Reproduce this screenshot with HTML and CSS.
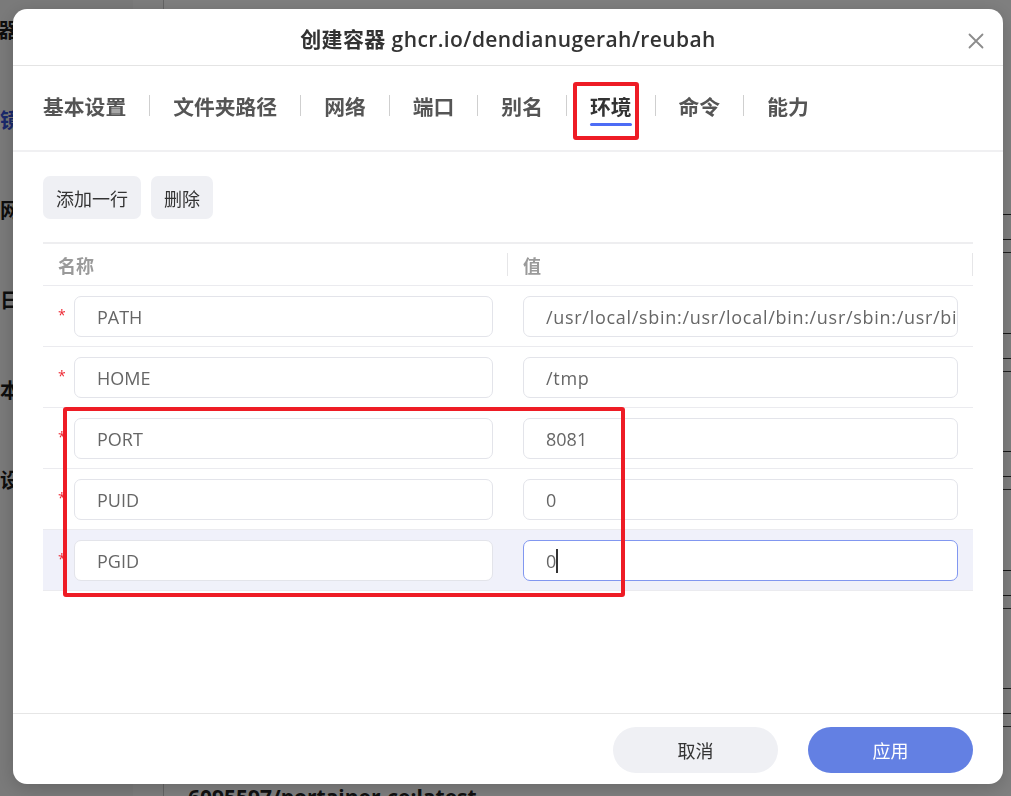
FILE: index.html
```html
<!DOCTYPE html>
<html lang="zh-CN">
<head>
<meta charset="utf-8">
<title>创建容器</title>
<link rel="stylesheet" href="styles.css">
</head>
<body>
<div class="page">
  <aside class="side">
    <div class="nav nav-cut">容器</div>
    <div class="nav nav-active">镜像</div>
    <div class="nav">网络</div>
    <div class="nav">日志</div>
    <div class="nav">本地</div>
    <div class="nav">设置</div>
  </aside>
  <div class="gutter"></div>
  <main class="panel">
    <div class="item"><span class="item-title">dendianugerah/reubah:latest</span><span class="link">链接</span></div>
    <div class="item"><span class="item-title">nginx:latest</span><span class="link">链接</span></div>
    <div class="item"><span class="item-title">redis:latest</span><span class="link">链接</span></div>
    <div class="item"><span class="item-title">mysql:8.0</span><span class="link">链接</span></div>
    <div class="item"><span class="item-title">6095597/portainer-ce:latest</span><span class="link">链接</span></div>
  </main>
</div>
<div class="overlay"></div>
<section class="modal">
  <header class="m-head">
    <div class="m-title">创建容器 ghcr.io/dendianugerah/reubah</div>
    <svg class="m-close" viewBox="0 0 16 16" width="16" height="16"><path d="M1.5 1.5 L14.5 14.5 M14.5 1.5 L1.5 14.5" stroke="#8c8c8c" stroke-width="1.8" stroke-linecap="round" fill="none"/></svg>
  </header>
  <nav class="tabs">
    <div class="tab">基本设置</div>
    <div class="tab">文件夹路径</div>
    <div class="tab">网络</div>
    <div class="tab">端口</div>
    <div class="tab">别名</div>
    <div class="tab active">环境</div>
    <div class="tab">命令</div>
    <div class="tab">能力</div>
  </nav>
  <div class="m-body">
    <div class="actions">
      <div class="btn">添加一行</div>
      <div class="btn">删除</div>
    </div>
    <div class="table">
      <div class="thead">
        <div class="th">名称</div>
        <div class="th">值</div>
      </div>
      <div class="tr">
        <div class="td"><span class="req">*</span><div class="inp">PATH</div></div>
        <div class="td"><div class="inp inp-wide">/usr/local/sbin:/usr/local/bin:/usr/sbin:/usr/bin:/sbin:/bin</div></div>
      </div>
      <div class="tr">
        <div class="td"><span class="req">*</span><div class="inp">HOME</div></div>
        <div class="td"><div class="inp inp-wide">/tmp</div></div>
      </div>
      <div class="tr">
        <div class="td"><span class="req">*</span><div class="inp">PORT</div></div>
        <div class="td"><div class="inp">8081</div></div>
      </div>
      <div class="tr">
        <div class="td"><span class="req">*</span><div class="inp">PUID</div></div>
        <div class="td"><div class="inp">0</div></div>
      </div>
      <div class="tr hover">
        <div class="td"><span class="req">*</span><div class="inp">PGID</div></div>
        <div class="td"><div class="inp focus">0<span class="caret"></span></div></div>
      </div>
    </div>
  </div>
  <footer class="m-foot">
    <div class="fbtn cancel">取消</div>
    <div class="fbtn ok">应用</div>
  </footer>
</section>
<div class="mark mark-tab"></div>
<div class="mark mark-rows"></div>
</body>
</html>
```
FILE: styles.css
```css
* { box-sizing: border-box; }
html, body { margin: 0; padding: 0; }
body {
  font-family: "Open Sans", "Noto Sans CJK SC", sans-serif;
  width: 1011px;
  height: 796px;
  overflow: hidden;
  background: #fff;
}

/* background page */
.page {
  display: flex;
  height: 796px;
  overflow: hidden;
  background: #fff;
}
.side {
  width: 133px;
  flex: none;
  background: #f4f4f4;
  padding-top: 15px;
  display: flex;
  flex-direction: column;
  gap: 60px;
  font-family: "Noto Sans CJK SC", sans-serif;
  font-size: 20px;
  font-weight: 700;
  line-height: 30px;
  color: #1c1c1c;
}
.nav { white-space: nowrap; }
.nav-cut { margin-left: -22px; }
.nav-active { color: #3552d8; }
.gutter { width: 30px; flex: none; background: #fafafa; }
.panel {
  flex: 1;
  border-left: 1px solid #c8c8c8;
  padding: 214px 0 0 24px;
  overflow: hidden;
}
.item {
  height: 118.5px;
  display: flex;
  justify-content: space-between;
  align-items: flex-start;
  position: relative;
}
.item::after {
  content: "";
  position: absolute;
  right: 0;
  top: 38px;
  width: 60px;
  height: 1px;
  background: #444;
}
.item-title {
  margin-top: 96px;
  font-size: 21px;
  font-weight: 700;
  line-height: 26px;
  color: #222;
  white-space: nowrap;
}
.link {
  height: 26px;
  border-top: 1px solid #333;
  border-bottom: 1px solid #333;
  padding: 0 10px;
  margin-right: -40px;
  font-family: "Noto Sans CJK SC", sans-serif;
  font-size: 15px;
  line-height: 24px;
  color: #222;
}
.overlay {
  position: fixed;
  inset: 0;
  background: rgba(0, 0, 0, 0.5);
}

/* modal */
.modal {
  position: fixed;
  left: 13px;
  top: 9px;
  width: 990px;
  height: 775px;
  background: #fff;
  border-radius: 14px;
  display: flex;
  flex-direction: column;
  overflow: hidden;
  box-shadow: 0 4px 18px rgba(0, 0, 0, 0.18);
}
.m-head {
  height: 57px;
  flex: none;
  border-bottom: 1px solid #e4e4e4;
  display: flex;
  align-items: center;
  justify-content: center;
  position: relative;
}
.m-title {
  font-size: 21px;
  font-weight: 600;
  letter-spacing: 0.4px;
  color: #333;
  padding-top: 2px;
}
.m-close {
  position: absolute;
  right: 19px;
  top: 24px;
}
.tabs {
  height: 86px;
  flex: none;
  border-bottom: 2px solid #f0f0f2;
  display: flex;
  align-items: center;
  padding: 0 30px 4px;
}
.tab {
  position: relative;
  padding: 0 23px 0 24px;
  font-family: "Noto Sans CJK SC", sans-serif;
  font-size: 20.8px;
  font-weight: 700;
  line-height: 30px;
  color: #555;
  white-space: nowrap;
}
.tab:first-child { padding-left: 0; }
.tab + .tab::before {
  content: "";
  position: absolute;
  left: 0;
  top: 4px;
  width: 1px;
  height: 21px;
  background: #cfcfcf;
}
.tab.active { color: #333; }
.tab.active::after {
  content: "";
  position: absolute;
  left: 24px;
  right: 23px;
  bottom: -5px;
  height: 3px;
  border-radius: 2px;
  background: #4d6cf5;
}

.m-body {
  flex: 1;
  padding: 24px 30px 0;
}
.actions { display: flex; gap: 10px; }
.btn {
  height: 43px;
  padding: 0 13px;
  border-radius: 7px;
  background: #eff0f4;
  font-family: "Noto Sans CJK SC", sans-serif;
  font-size: 18px;
  color: #333;
  display: flex;
  align-items: center;
}
.table {
  margin-top: 23px;
  border-top: 2px solid #eeeef0;
}
.thead {
  display: grid;
  grid-template-columns: minmax(0, 1fr) minmax(0, 1fr);
  height: 42px;
  border-bottom: 1px solid #ebebef;
}
.th {
  position: relative;
  padding-left: 15px;
  font-family: "Noto Sans CJK SC", sans-serif;
  font-size: 18px;
  font-weight: 700;
  color: #9a9a9a;
  display: flex;
  align-items: center;
}
.th::after {
  content: "";
  position: absolute;
  right: 0;
  top: 9px;
  width: 1px;
  height: 23px;
  background: #e6e6e8;
}
.tr {
  display: grid;
  grid-template-columns: minmax(0, 1fr) minmax(0, 1fr);
  padding: 10px 0 9px;
  border-bottom: 1px solid #ebebef;
}
.tr.hover { background: #f0f1fa; }
.td {
  min-width: 0;
  padding: 0 15px;
  display: flex;
  align-items: center;
}
.req {
  width: 16px;
  flex: none;
  color: #ee2a35;
  font-size: 14px;
  line-height: 14px;
  margin-top: -4px;
}
.inp {
  flex: 1;
  min-width: 0;
  height: 41px;
  border: 1px solid #e3e4ea;
  border-radius: 7px;
  background: #fff;
  padding: 0 22px;
  font-size: 18px;
  color: #666;
  display: flex;
  align-items: center;
  white-space: nowrap;
  overflow: hidden;
}
.inp-wide { letter-spacing: 0.7px; }
.inp.focus { border-color: #8197f0; }
.caret {
  display: inline-block;
  width: 2px;
  height: 24px;
  background: #333;
}

.m-foot {
  height: 71px;
  flex: none;
  border-top: 1px solid #e6e6e6;
  display: flex;
  justify-content: flex-end;
  align-items: flex-start;
  gap: 30px;
  padding: 13px 30px 0;
}
.fbtn {
  width: 165px;
  height: 46px;
  border-radius: 23px;
  font-family: "Noto Sans CJK SC", sans-serif;
  font-size: 18px;
  display: flex;
  align-items: center;
  justify-content: center;
}
.cancel { background: #eff0f4; color: #333; }
.ok { background: #6380e3; color: #fff; }

/* annotation boxes */
.mark {
  position: fixed;
  border: 4px solid #ee1c25;
  border-radius: 3px;
}
.mark-tab { left: 573px; top: 82px; width: 66px; height: 58px; }
.mark-rows { left: 63px; top: 407px; width: 562px; height: 190px; }
```
